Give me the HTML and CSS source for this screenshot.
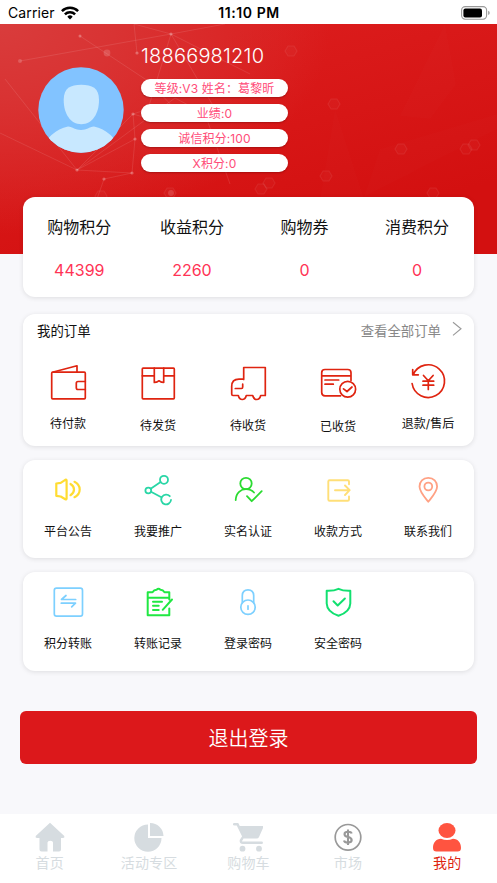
FILE: index.html
```html
<!DOCTYPE html>
<html lang="zh-CN">
<head>
<meta charset="utf-8">
<title>我的</title>
<link rel="stylesheet" href="styles.css">
</head>
<body>
<div class="app">
  <header class="status">
    <div class="carrier"><span>Carrier</span>
      <svg width="18" height="14" viewBox="0 0 18 14" fill="none" stroke="#000" stroke-width="2.5"><path d="M.9 5.2a11.5 11.5 0 0 1 16.2 0M3.9 8.4a7.2 7.2 0 0 1 10.2 0"/><path d="M9 13.4L6.3 10.7a3.8 3.8 0 0 1 5.4 0z" fill="#000" stroke="none"/></svg>
    </div>
    <div class="clock">11:10 PM</div>
    <svg class="battery" width="29" height="14" viewBox="0 0 29 14"><rect x=".6" y=".6" width="25" height="12.6" rx="3.6" fill="#fff" stroke="#999" stroke-width="1.1"/><rect x="2.4" y="2.4" width="18.6" height="9" rx="2" fill="#000"/><path d="M27.2 4.7q1.5.6 1.5 2.2t-1.5 2.2z" fill="#999"/></svg>
  </header>

  <section class="hero">
    <svg class="network" width="497" height="230" viewBox="0 0 497 230" fill="none" stroke="#fff">
      <g stroke-opacity=".13" stroke-width=".8">
        <path d="M20 37L171 10 134 0M171 10L225 0M171 10L250 50M171 10L148 85 133 90M80 12L148 57 180 90M134 0L137 29M171 10L215 85M5 55L77 146 0 109M77 146L132 149 135 115 133 90 77 146 135 115M77 146L175 74 205 90 230 160M104 155L132 149M104 155L97 175M133 90L160 98"/>
      </g>
      <g fill="#fff" fill-opacity=".28" stroke="none"><circle cx="171" cy="10" r="1.6"/><circle cx="80" cy="12" r="1.5"/><circle cx="107" cy="29" r="3.4" fill-opacity=".16"/><circle cx="20" cy="37" r="2" fill-opacity=".18"/><circle cx="137" cy="29" r="1.6"/><circle cx="133" cy="90" r="1.6"/><circle cx="135" cy="115" r="1.6"/><circle cx="132" cy="149" r="1.6"/><circle cx="77" cy="146" r="1.6"/><circle cx="104" cy="155" r="1.6"/><circle cx="171" cy="169" r="3" fill-opacity=".15"/></g>
      <g fill="#fff" fill-opacity=".025" stroke-opacity=".07" stroke-width="1.2">
        <path id="hex" d="M285 27l3-5h6l3 5-3 5h-6z"/>
        <use href="#hex" x="43" y="53"/><use href="#hex" x="110" y="98"/><use href="#hex" x="35" y="125"/><use href="#hex" x="175" y="98"/><use href="#hex" x="183" y="94"/><use href="#hex" x="-30" y="138"/><use href="#hex" x="-22" y="132"/><use href="#hex" x="-190" y="145"/><use href="#hex" x="142" y="142"/><use href="#hex" x="-121" y="142"/>
      </g>
      <g fill="#fff" fill-opacity=".012" stroke="none"><path d="M335 85L320 175 364 175zM364 173L497 105V90L380 125zM445 0L456 60 430 95 400 92Z"/></g>
    </svg>
    <div class="profile">
      <svg class="avatar" width="86" height="86" viewBox="0 0 86 86"><defs><clipPath id="disc"><circle cx="43" cy="43" r="42.7"/></clipPath></defs><circle cx="43" cy="43" r="42.7" fill="#82c3ff"/><g clip-path="url(#disc)" fill="#c8e8ff"><path d="M43.300 17.800C54 17.800 61 21 61 33 61 47 54 57.200 43.300 57.200S25.700 47 25.700 33C25.700 21 32.500 17.800 43.300 17.800Z"/><path d="M0 86C8 71 18 62 30 59.500 35 60 37 63 43 63S51 60 56 59.500C68 62 78 71 86 86Z"/></g></svg>
      <div class="info">
        <div class="phone">18866981210</div>
        <div class="pill">等级:V3 姓名：葛黎昕</div>
        <div class="pill">业绩:0</div>
        <div class="pill">诚信积分:100</div>
        <div class="pill">X积分:0</div>
      </div>
    </div>
  </section>

  <main class="content">
    <section class="card stats">
      <div class="stat"><span>购物积分</span><b>44399</b></div>
      <div class="stat"><span>收益积分</span><b>2260</b></div>
      <div class="stat"><span>购物券</span><b>0</b></div>
      <div class="stat"><span>消费积分</span><b>0</b></div>
    </section>

    <section class="card orders">
      <div class="card-head"><span class="title">我的订单</span><span class="more">查看全部订单</span>
        <svg width="10" height="16" viewBox="0 0 10 16" fill="none" stroke="#999" stroke-width="1.1"><path d="M1 1.200L9 7.700 1 14.300"/></svg></div>
      <div class="grid">
        <div class="item"><svg class="icon red" viewBox="0 0 40 40"><rect x="3.700" y="9.700" width="33.600" height="26.600" rx="1"/><path d="M5.300 9.500L29 3.300V9.700M37.300 19H30q-1.700 0-1.700 1.700v4.600q0 1.700 1.700 1.700h7.300"/></svg><span class="up">待付款</span></div>
        <div class="item"><svg class="icon red" viewBox="0 0 40 40"><rect x="4.300" y="5.700" width="32" height="30.600" rx=".8"/><path d="M4.300 13.300h12M25.700 13.300h10.600M16.300 5.700v14.200l2.200-.2 2.500-1.400 2.500 1.400 2.200.2V5.700"/></svg><span class="mid">待发货</span></div>
        <div class="item"><svg class="icon red" viewBox="0 0 40 40"><path d="M15.700 17V5H37.300V33H32.700Q31.700 37 28.700 37T24.700 33H18.300Q17.300 37 14.300 37T10.300 33H5Q3.700 33 3.700 31.500V24Q3.700 16.700 11 16.700H15.700M7.300 26H13.500Q14.700 26 14.700 24.500V21.700"/></svg><span class="mid">待收货</span></div>
        <div class="item"><svg class="icon red" viewBox="0 0 40 40"><path d="M22.500 33.300H7Q3.700 33.300 3.700 30V10.300Q3.700 7 7 7H29.700Q33 7 33 10.300V18M3.700 13.300H33M7 17.500H20.700M7 21.700H15.300M25.500 26.300L29 29 34 24.500"/><circle cx="29.700" cy="26.700" r="7.900"/></svg><span class="low">已收货</span></div>
        <div class="item"><svg class="icon red" viewBox="0 0 40 40"><path d="M4.700 7V12.300H10.300M5.200 12.300A16.300 16.300 0 1 1 4.100 21M15.500 13L20.300 18.300 25.100 13M20.300 18.300V27M15 18.700H25.700M15 22.700H25.700"/></svg><span class="up">退款/售后</span></div>
      </div>
    </section>

    <section class="card menu services">
      <div class="grid">
        <div class="item"><svg class="icon yellow" viewBox="0 0 40 40"><path d="M8.300 13L12.700 12.300 17.300 9.300Q18.600 8.800 18.600 10V28Q18.600 29.200 17.300 28.700L12.700 26 8.300 25.300ZM22.500 13.500Q26 15.500 26 19T22.500 24.700M26.500 11.300Q31.700 14 31.700 19T26.500 26.700"/></svg><span>平台公告</span></div>
        <div class="item"><svg class="icon teal" viewBox="0 0 40 40"><circle cx="26" cy="9.300" r="4"/><circle cx="10.300" cy="20" r="2.900"/><path d="M12.700 18.300L22.600 11.500M13 21.300L23.800 27M33 29.500A4.900 4.900 0 1 1 31.800 25.700"/></svg><span>我要推广</span></div>
        <div class="item"><svg class="icon green" viewBox="0 0 40 40"><circle cx="18" cy="13" r="5.700"/><path d="M7.700 29.500C8 22 13 18.700 18 18.700Q23 18.700 26 22M19 25.700L23.700 30.700 33.700 20.700"/></svg><span>实名认证</span></div>
        <div class="item"><svg class="icon gold" viewBox="0 0 40 40"><path d="M31 13.700V11Q31 9.700 29.700 9.700H11.600Q10.300 9.700 10.300 11V29Q10.300 30.300 11.600 30.300H29.700Q31 30.300 31 29V26M17 19.700H31.500M27 15L31.700 19.700 27 24.500"/></svg><span>收款方式</span></div>
        <div class="item"><svg class="icon coral" viewBox="0 0 40 40"><path d="M20.300 31.300C16 26 11.500 21 11.500 16 11.500 11 15 7.300 20.300 7.300S29.100 11 29.100 16C29.100 21 24.500 26 20.300 31.300Z"/><circle cx="20.300" cy="16" r="3.900"/></svg><span>联系我们</span></div>
      </div>
    </section>

    <section class="card menu account">
      <div class="grid">
        <div class="item"><svg class="icon sky" viewBox="0 0 40 40"><rect x="6.300" y="5.700" width="28.200" height="28" rx="2.200"/><path d="M18 13L13.500 17H27.700M13.300 20.700H27.500L23.700 24.300"/></svg><span>积分转账</span></div>
        <div class="item"><svg class="icon lime" viewBox="0 0 40 40"><path d="M31.300 17V9.700H26.500Q25 7.300 22.500 7.300 20.500 5 18.500 7.300 16 7.300 14.500 9.700H9.700V32.700H31.300V26M9.700 15.300H31.300M15 19.300H24M15 23.300H20.700M15 27.500H20.700M24.700 27.300L34 17"/></svg><span>转账记录</span></div>
        <div class="item"><svg class="icon sky" viewBox="0 0 40 40"><circle cx="20" cy="24.700" r="7.200"/><path d="M14.300 20V13Q14.500 7.300 20 7.300T25.700 13V20M20 23.300V26.700"/></svg><span>登录密码</span></div>
        <div class="item"><svg class="icon mint" viewBox="0 0 40 40"><path d="M20.500 6.300Q25 8.600 32.300 8.300V21Q32 29.500 20.500 33.300 9 29.500 8.700 21V8.300Q16 8.600 20.500 6.300ZM15.500 18.700L19.700 23 26.900 16"/></svg><span>安全密码</span></div>
      </div>
    </section>

    <button class="logout">退出登录</button>
  </main>

  <nav class="tabs">
    <div class="tab"><svg width="30" height="30" viewBox="0 0 30 30" fill="#d6dce0"><path d="M15 .8L29.300 14Q30 16 28 16H26V27.500Q26 29.500 24 29.500H18V20.500Q18 18.800 15.300 18.800T12.500 20.500V29.500H6.500Q4.500 29.500 4.500 27.500V16H2Q0 16 .7 14Z"/></svg><span>首页</span></div>
    <div class="tab"><svg width="30" height="30" viewBox="0 0 30 30" fill="#d6dce0"><path d="M14 2.500V16H27.500A13.600 13.600 0 1 1 14 2.500Z"/><path d="M16 1A13.300 13.300 0 0 1 29.500 14H16Z"/></svg><span>活动专区</span></div>
    <div class="tab"><svg width="30" height="30" viewBox="0 0 30 30"><path d="M1.200 2.200H4.500L10.500 14.500 8 18.200Q7.400 20.800 10 20.800H28.700" fill="none" stroke="#d6dce0" stroke-width="2.500" stroke-linecap="round"/><path d="M6.500 4H29.800Q31 4.500 30 6L26 15Q25.400 16.500 23.500 16.500H11Z" fill="#d6dce0"/><circle cx="9.500" cy="26.700" r="2.900" fill="#d6dce0"/><circle cx="26" cy="26.700" r="2.900" fill="#d6dce0"/></svg><span>购物车</span></div>
    <div class="tab"><svg width="30" height="30" viewBox="0 0 30 30" fill="none" stroke="#999"><circle cx="15" cy="15.300" r="12.800" stroke-width="1.700"/><path d="M18.700 11.500Q18.200 9.800 15 9.800 11.500 9.800 11.500 12.200 11.500 14.300 15 15T18.700 18.100Q18.700 20.600 15 20.600 11.500 20.600 11 18.500M15 7.500V23" stroke-width="2.100"/></svg><span>市场</span></div>
    <div class="tab active"><svg width="30" height="30" viewBox="0 0 30 30" fill="#ff5440"><ellipse cx="15" cy="8.500" rx="8.500" ry="7.600"/><path d="M1 26C1 20.500 4 17 9 16.700Q15 19.500 21 16.700C26 17 29 20.500 29 26Q29 29.500 25.500 29.500H4.500Q1 29.500 1 26Z"/></svg><span>我的</span></div>
  </nav>
</div>
</body>
</html>
```
FILE: styles.css
```css
* { box-sizing: border-box; }
body { margin: 0; background: #f8f8fb; font-family: Inter, "Noto Sans CJK SC", sans-serif; color: #111; }
.app { width: 497px; height: 883px; display: flex; flex-direction: column; overflow: hidden; }
svg { display: block; flex: none; }

.status { height: 24px; flex: none; background: #fff; display: grid; grid-template-columns: 1fr auto 1fr; align-items: center; padding: 1px 7px 0 8px; color: #000; }
.carrier { display: flex; align-items: center; gap: 6px; font-size: 14px; line-height: 24px; letter-spacing: .1px; }
.carrier svg { margin-top: -1px; }
.clock { font-size: 14px; font-weight: 600; line-height: 24px; letter-spacing: .6px; }
.battery { justify-self: end; margin-top: -1px; }

.hero { position: relative; height: 230px; flex: none; background: radial-gradient(ellipse 330px 210px at 0 0, #d93c3c 0%, #d93333 35%, rgba(217, 30, 30, 0) 100%), linear-gradient(165deg, #db1c1c 20%, #d31010 80%); }
.network { position: absolute; inset: 0; }
.profile { position: relative; display: flex; padding: 18px 0 0 38px; }
.avatar { margin-top: 25px; }
.info { margin-left: 17px; width: 147px; }
.phone { height: 28px; line-height: 28px; margin-bottom: 9px; font-size: 20px; font-weight: 350; color: #fff; white-space: nowrap; letter-spacing: .2px; }
.pill { height: 18px; margin-bottom: 7px; padding-top: 1px; border-radius: 9px; background: #fff; color: #ff4d79; font-size: 12px; line-height: 18px; letter-spacing: .12px; text-align: center; white-space: nowrap; box-shadow: 0 1px 2px rgba(80, 0, 0, .35); }

.content { position: relative; flex: 1; margin-top: -57px; padding: 0 23px; }
.card { width: 451px; background: #fff; border-radius: 12px; box-shadow: 0 1px 5px rgba(0, 0, 0, .11); }
.stats { height: 100px; display: grid; grid-template-columns: repeat(4, 112.6px); }
.stat { display: flex; flex-direction: column; align-items: center; padding-top: 18px; }
.stat span { font-size: 16px; line-height: 24px; }
.stat b { margin-top: 19px; font-weight: 400; font-size: 16px; line-height: 24px; color: #ff3355; }

.orders { height: 132px; margin-top: 17px; }
.card-head { height: 48px; display: flex; align-items: flex-start; padding: 7px 12px 0 14px; }
.title { font-size: 13.4px; line-height: 20px; }
.more { margin-left: auto; margin-right: 11px; color: #888; font-size: 13.4px; line-height: 20px; }
.grid { display: grid; grid-template-columns: repeat(5, 90px); }
.item { display: flex; flex-direction: column; align-items: center; font-size: 12px; line-height: 18px; white-space: nowrap; }
.item .up { margin-top: 13px; }
.item .mid { margin-top: 15px; }
.item .low { margin-top: 16px; }
.menu { padding-top: 10px; }
.menu .item span { margin-top: 13px; }
.services { height: 98px; margin-top: 14px; }
.account { height: 99px; margin-top: 14px; }

.icon { width: 40px; height: 40px; fill: none; stroke: currentColor; stroke-width: 1.7; stroke-linecap: round; stroke-linejoin: round; transform: translateY(.5px); }
.red { color: #df2410; }
.yellow { color: #ffdc32; stroke-width: 2.2; }
.teal { color: #29d6a6; stroke-width: 1.8; }
.green { color: #2bdb31; stroke-width: 1.8; }
.gold { color: #ffdf78; stroke-width: 1.9; }
.coral { color: #ffa184; stroke-width: 1.8; }
.sky { color: #7dd0ff; }
.lime { color: #20e842; stroke-width: 2; }
.mint { color: #12e070; stroke-width: 2; }

.logout { display: block; width: 457px; height: 53px; margin: 40px 0 0 -3px; padding: 0; border: 0; border-radius: 6px; background: #dc181b; color: #fff; font-family: "Noto Sans CJK SC", sans-serif; font-size: 20px; font-weight: 350; }

.tabs { height: 69px; flex: none; display: grid; grid-template-columns: repeat(5, 1fr); background: #fff; }
.tab { display: flex; flex-direction: column; align-items: center; padding-top: 8px; color: #d6dce0; font-size: 14px; line-height: 20px; }
.tab span { margin-top: 1px; letter-spacing: .2px; }
.active { color: #dd2410; }
```
